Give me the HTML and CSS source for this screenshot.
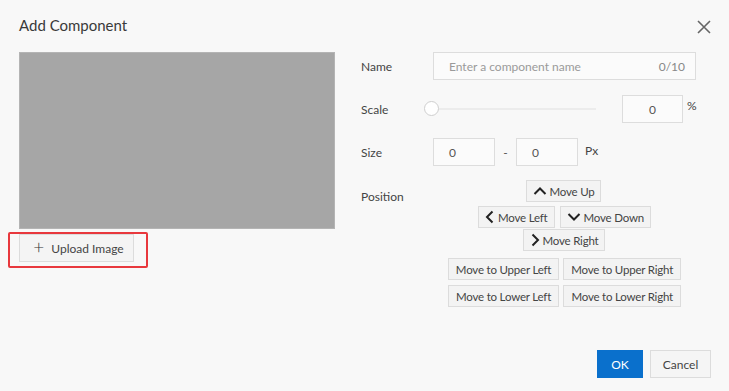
FILE: index.html
```html
<!DOCTYPE html>
<html lang="en">
<head>
    <meta charset="UTF-8">
    <meta name="viewport" content="width=device-width, initial-scale=1.0">
    <title>Add Component</title>
    <link rel="stylesheet" href="styles.css">
</head>
<body>
    <div class="dialog">
        <div class="dialog-header">
            <h1>Add Component</h1>
            <svg class="close" width="14" height="14" viewBox="0 0 14 14">
                <path d="M1 1 L13 13 M13 1 L1 13" stroke="#666" stroke-width="1.6" fill="none"/>
            </svg>
        </div>

        <div class="dialog-body">
            <!-- image preview + upload -->
            <div class="left">
                <div class="preview"></div>
                <div class="upload-wrap">
                    <button class="btn upload-btn"><span class="plus">+</span>Upload Image</button>
                    <div class="highlight"></div>
                </div>
            </div>

            <!-- form -->
            <div class="form">
                <div class="row">
                    <label>Name</label>
                    <div class="field name-field">
                        <span class="placeholder">Enter a component name</span>
                        <span class="counter">0/10</span>
                    </div>
                </div>

                <div class="row">
                    <label>Scale</label>
                    <div class="slider">
                        <div class="track"></div>
                        <div class="thumb"></div>
                    </div>
                    <div class="field small scale-input">0</div>
                    <span class="unit">%</span>
                </div>

                <div class="row">
                    <label>Size</label>
                    <div class="field small">0</div>
                    <span class="dash">-</span>
                    <div class="field small">0</div>
                    <span class="unit px">Px</span>
                </div>

                <div class="row position-row">
                    <label>Position</label>
                    <div class="position">
                        <div class="arrows">
                            <button class="btn move up-btn">
                                <svg width="14" height="10" viewBox="0 0 14 10"><polyline points="1.5,8 7,2.5 12.5,8" stroke="#222" stroke-width="2" fill="none"/></svg>Move Up
                            </button>
                            <div class="arrow-line">
                                <button class="btn move">
                                    <svg width="10" height="14" viewBox="0 0 10 14"><polyline points="7.5,1.5 2,7 7.5,12.5" stroke="#222" stroke-width="2" fill="none"/></svg>Move Left
                                </button>
                                <button class="btn move">
                                    <svg width="14" height="10" viewBox="0 0 14 10"><polyline points="1.5,2 7,7.5 12.5,2" stroke="#222" stroke-width="2" fill="none"/></svg>Move Down
                                </button>
                            </div>
                            <button class="btn move right-btn">
                                <svg width="10" height="14" viewBox="0 0 10 14"><polyline points="2.5,1.5 8,7 2.5,12.5" stroke="#222" stroke-width="2" fill="none"/></svg>Move Right
                            </button>
                        </div>
                        <div class="corners">
                            <button class="btn move">Move to Upper Left</button>
                            <button class="btn move">Move to Upper Right</button>
                            <button class="btn move">Move to Lower Left</button>
                            <button class="btn move">Move to Lower Right</button>
                        </div>
                    </div>
                </div>
            </div>
        </div>

        <div class="dialog-footer">
            <button class="btn primary">OK</button>
            <button class="btn cancel">Cancel</button>
        </div>
    </div>
</body>
</html>
```

FILE: styles.css
```css
body {
    margin: 0;
    padding: 0;
    background-color: #f8f8f8;
    font-family: Lato, "Open Sans", sans-serif;
    color: #333;
}

.dialog {
    width: 729px;
    height: 391px;
    box-sizing: border-box;
    padding: 0 18px 0 19px;
    display: flex;
    flex-direction: column;
}

.dialog-header {
    height: 52px;
    display: flex;
    justify-content: space-between;
    align-items: center;
}

    .dialog-header h1 {
        margin: 0 0 2px 0;
        font-size: 15px;
        font-weight: normal;
        color: #3a3a3a;
    }

    .dialog-header .close {
        margin-right: 0;
        margin-top: 2px;
    }

.dialog-body {
    display: flex;
    gap: 26px;
}

.left {
    width: 316px;
}

.preview {
    height: 177px;
    background-color: #a6a6a6;
    border: 1px solid #b4b4b4;
    box-sizing: border-box;
}

.upload-wrap {
    position: relative;
    margin-top: 5px;
}

.highlight {
    position: absolute;
    left: -11px;
    top: -2px;
    width: 140px;
    height: 36px;
    border: 2px solid #e8383d;
    border-radius: 2px;
    box-sizing: border-box;
}

.btn {
    font-family: Lato, "Open Sans", sans-serif;
    font-size: 12px;
    color: #444;
    background-color: #f3f3f3;
    border: 1px solid #dcdcdc;
    border-radius: 0;
    padding: 0 8px;
    cursor: pointer;
    display: inline-flex;
    align-items: center;
    justify-content: center;
}

.upload-btn {
    width: 115px;
    height: 28px;
    background-color: #f4f4f4;
    color: #444;
    font-size: 12px;
    padding-left: 12px;
}

    .upload-btn .plus {
        font-size: 19px;
        font-weight: 300;
        margin-right: 7px;
        margin-top: -3px;
        color: #333;
    }

.form {
    flex: 1;
    display: flex;
    flex-direction: column;
    gap: 15px;
}

.row {
    display: flex;
    align-items: center;
    height: 28px;
}

    .row label {
        width: 72px;
        font-size: 12px;
        color: #444;
    }

.field {
    height: 28px;
    box-sizing: border-box;
    border: 1px solid #dddddd;
    background-color: #fbfbfb;
    font-size: 12px;
    display: flex;
    align-items: center;
    color: #555;
}

.name-field {
    width: 263px;
    padding: 0 10px 0 15px;
    justify-content: space-between;
}

    .name-field .placeholder {
        color: #9a9a9a;
    }

    .name-field .counter {
        color: #888;
    }

.field.small {
    width: 62px;
    padding-left: 15px;
}

.slider {
    position: relative;
    width: 172px;
    height: 16px;
    margin-left: -9px;
    margin-right: 26px;
}

    .slider .track {
        position: absolute;
        left: 8px;
        right: 0;
        top: 7px;
        height: 2px;
        background-color: #ececec;
    }

    .slider .thumb {
        position: absolute;
        left: 0;
        top: 0;
        width: 15px;
        height: 15px;
        box-sizing: border-box;
        border: 1px solid #cfcfcf;
        border-radius: 50%;
        background-color: #fff;
    }

.scale-input {
    width: 61px !important;
    padding-left: 0 !important;
    justify-content: center;
}

.unit {
    font-size: 12px;
    color: #444;
    margin-left: 4px;
    margin-top: -8px;
}

    .unit.px {
        margin-left: 7px;
        margin-top: -4px;
    }

.dash {
    width: 21px;
    text-align: center;
    font-size: 12px;
    color: #555;
}

.position-row {
    align-items: flex-start;
    height: auto;
}

    .position-row label {
        margin-top: 8px;
    }

.position {
    width: 263px;
    display: flex;
    flex-direction: column;
    align-items: center;
    margin-top: -1px;
}

.arrows {
    display: flex;
    flex-direction: column;
    align-items: center;
}

.arrow-line {
    display: flex;
    gap: 5px;
    margin: 4px 0 1px 0;
}

.btn.move {
    height: 22px;
    padding: 0 7px;
    font-size: 11.5px;
    letter-spacing: -0.2px;
}

    .btn.move svg {
        margin-right: 3px;
    }

.arrows .btn.move {
    padding: 0 6px;
}

.up-btn {
    margin-left: -2px;
}

.right-btn {
    margin-left: -1px;
}

.corners {
    margin-top: 7px;
    display: grid;
    grid-template-columns: auto auto;
    gap: 5px 4px;
}

.dialog-footer {
    margin-top: auto;
    margin-bottom: 13px;
    display: flex;
    justify-content: flex-end;
    gap: 7px;
}

    .dialog-footer .btn {
        height: 28px;
    }

.primary {
    width: 46px;
    background-color: #0a70cc;
    border-color: #0a70cc;
    color: #fff;
}

.cancel {
    width: 61px;
    background-color: #f5f5f5;
}
```
